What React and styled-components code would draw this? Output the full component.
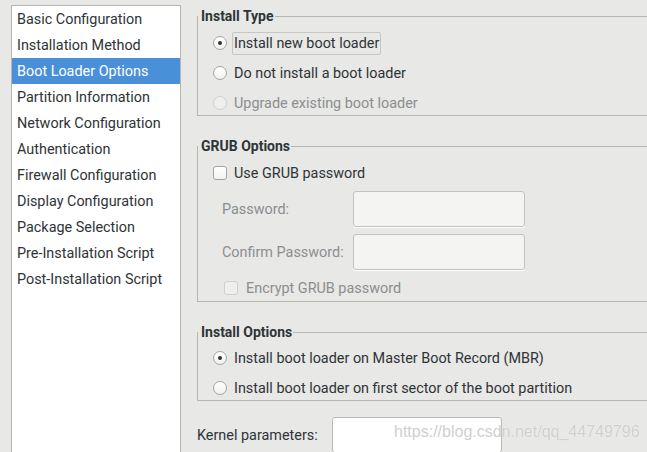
import React from 'react'
import styled, { createGlobalStyle } from 'styled-components'

const GlobalStyle = createGlobalStyle`
  html, body {
    margin: 0;
    padding: 0;
    background: #e8e8e7;
    overflow: hidden;
  }
  body {
    font-family: Roboto, "Noto Sans", sans-serif;
    font-size: 14.4px;
    color: #2e3436;
  }
`

const Window = styled.div`
  position: relative;
  display: flex;
  align-items: stretch;
  width: 647px;
  height: 452px;
  padding: 5px 0 0 11px;
  box-sizing: border-box;
  overflow: hidden;
`

const Sidebar = styled.ul`
  list-style: none;
  margin: 0;
  padding: 0;
  flex: none;
  width: 170px;
  box-sizing: border-box;
  background: #fff;
  border: 1px solid #b6b6b3;
  border-bottom: none;
`

const NavItem = styled.li`
  height: 25px;
  padding: 1px 0 0 5px;
  line-height: 26px;
  white-space: nowrap;
  background: ${p => (p.$active ? '#4a90d9' : 'transparent')};
  color: ${p => (p.$active ? '#fff' : '#2e3436')};
`

const Main = styled.div`
  flex: none;
  width: 480px;
  margin-left: 16px;
  display: flex;
  flex-direction: column;
`

const Group = styled.fieldset`
  margin: ${p => p.$top}px 0 0 0;
  padding: 0;
  min-width: 0;
  border: 1px solid #b6b6b3;
`

const Legend = styled.legend`
  padding: 0 1px 0 3px;
  font-weight: bold;
  font-size: 14px;
  line-height: 20px;
`

const Body = styled.div`
  display: flex;
  flex-direction: column;
  gap: ${p => p.$gap || 6}px;
  padding: ${p => p.$pad};
`

const Row = styled.div`
  display: flex;
  align-items: center;
  height: 24px;
  padding-left: ${p => p.$indent || 0}px;
  color: ${p => (p.$disabled ? '#8b8e8f' : '#2e3436')};
`

const Radio = styled.span`
  position: relative;
  flex: none;
  width: 14px;
  height: 14px;
  box-sizing: border-box;
  border-radius: 50%;
  border: 1px solid ${p => (p.$disabled ? '#d0d0ce' : '#a4a4a1')};
  background: ${p => (p.$disabled ? '#efefee' : 'linear-gradient(#ffffff, #f1f1f0)')};
  margin-right: 5px;

  &::after {
    content: '';
    display: ${p => (p.$checked ? 'block' : 'none')};
    position: absolute;
    left: 4px;
    top: 4px;
    width: 4px;
    height: 4px;
    border-radius: 50%;
    background: #2e3436;
  }
`

const Check = styled.span`
  flex: none;
  width: 14px;
  height: 14px;
  box-sizing: border-box;
  border-radius: 3px;
  border: 1px solid ${p => (p.$disabled ? '#d0d0ce' : '#a4a4a1')};
  background: ${p => (p.$disabled ? '#efefee' : 'linear-gradient(#ffffff, #f1f1f0)')};
  margin-right: ${p => p.$gap || 7}px;
`

const Caption = styled.span`
  display: inline-block;
  padding: 0 1px;
  line-height: 21px;
  border: 1px solid ${p => (p.$focus ? '#c6c6c3' : 'transparent')};
  border-radius: 2px;
  white-space: nowrap;
`

const FormGrid = styled.div`
  display: grid;
  grid-template-columns: 131px 172px;
  row-gap: 7px;
  align-items: center;
  padding-left: 9px;
`

const FieldLabel = styled.span`
  color: ${p => (p.$disabled ? '#8b8e8f' : '#2e3436')};
  white-space: nowrap;
`

const TextBox = styled.div`
  height: 36px;
  box-sizing: border-box;
  border: 1px solid ${p => (p.$disabled ? '#c2c2bf' : '#b9b9b6')};
  border-radius: 3px;
  background: ${p => (p.$disabled ? '#f4f4f3' : '#fff')};
  box-shadow: 0 1px 0 #fff;
  width: ${p => p.$width || 172}px;
`

const KernelRow = styled.div`
  display: flex;
  align-items: center;
  margin-top: 16px;
`

const KernelLabel = styled.span`
  width: 135px;
  flex: none;
`

const Watermark = styled.div`
  position: absolute;
  left: 394px;
  top: 423px;
  font-family: "Liberation Sans", Arial, sans-serif;
  font-size: 16px;
  color: #cfcfcf;
  text-shadow: 0 0 1px #fff;
  white-space: nowrap;
  pointer-events: none;
`

const sections = [
  'Basic Configuration',
  'Installation Method',
  'Boot Loader Options',
  'Partition Information',
  'Network Configuration',
  'Authentication',
  'Firewall Configuration',
  'Display Configuration',
  'Package Selection',
  'Pre-Installation Script',
  'Post-Installation Script',
]

const App = () => {
  return (
    <>
      <GlobalStyle />
      <Window>
        <Sidebar>
          {sections.map(s => (
            <NavItem key={s} $active={s === 'Boot Loader Options'}>{s}</NavItem>
          ))}
        </Sidebar>

        <Main>
          <Group $top={1}>
            <Legend>Install Type</Legend>
            <Body $pad="5px 0 0 15px">
              <Row>
                <Radio $checked />
                <Caption $focus>Install new boot loader</Caption>
              </Row>
              <Row>
                <Radio />
                <Caption>Do not install a boot loader</Caption>
              </Row>
              <Row $disabled>
                <Radio $disabled />
                <Caption>Upgrade existing boot loader</Caption>
              </Row>
            </Body>
          </Group>

          <Group $top={20}>
            <Legend>GRUB Options</Legend>
            <Body $pad="5px 0 1px 15px" $gap={6}>
              <Row>
                <Check />
                <span>Use GRUB password</span>
              </Row>
              <FormGrid>
                <FieldLabel $disabled>Password:</FieldLabel>
                <TextBox $disabled />
                <FieldLabel $disabled>Confirm Password:</FieldLabel>
                <TextBox $disabled />
              </FormGrid>
              <Row $indent={11} $disabled>
                <Check $disabled $gap={8} />
                <span>Encrypt GRUB password</span>
              </Row>
            </Body>
          </Group>

          <Group $top={20}>
            <Legend>Install Options</Legend>
            <Body $pad="4px 0 0 15px">
              <Row>
                <Radio $checked />
                <Caption>Install boot loader on Master Boot Record (MBR)</Caption>
              </Row>
              <Row>
                <Radio />
                <Caption>Install boot loader on first sector of the boot partition</Caption>
              </Row>
            </Body>
          </Group>

          <KernelRow>
            <KernelLabel>Kernel parameters:</KernelLabel>
            <TextBox $width={170} />
          </KernelRow>
        </Main>

        <Watermark>https://blog.csdn.net/qq_44749796</Watermark>
      </Window>
    </>
  )
}

export default App
